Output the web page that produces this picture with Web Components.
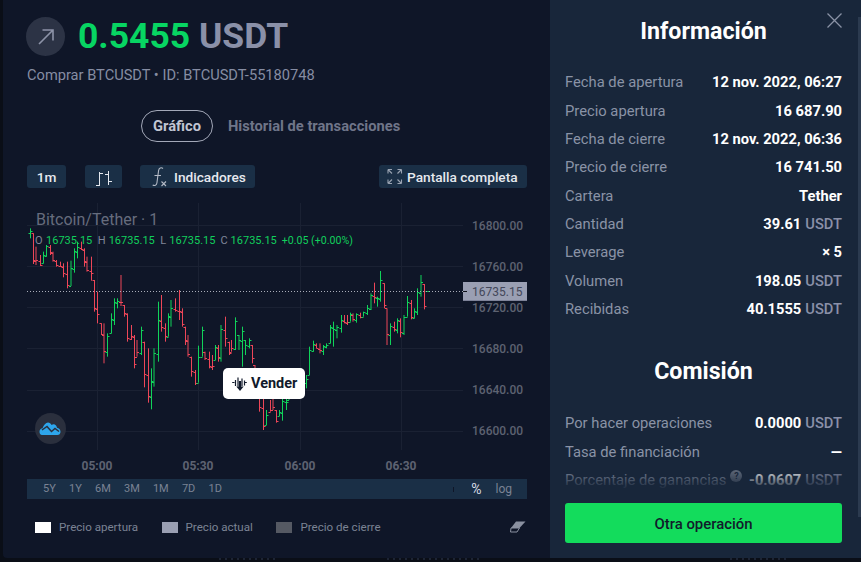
<!DOCTYPE html>
<html lang="es"><head><meta charset="utf-8"><title>Operación</title>
<style>
html,body{margin:0;padding:0;background:#0a0e17;font-family:Roboto,"Liberation Sans",sans-serif;overflow:hidden}
</style></head><body>
<trade-modal>
  <div slot="left">
    <trade-header amount="0.5455" unit="USDT" sub="Comprar BTCUSDT • ID: BTCUSDT-55180748"></trade-header>
    <tab-bar></tab-bar>
    <chart-toolbar></chart-toolbar>
    <price-chart></price-chart>
    <range-bar></range-bar>
    <chart-legend></chart-legend>
  </div>
  <info-panel slot="right">
    <panel-title>Información</panel-title>
    <info-row label="Fecha de apertura" value="12 nov. 2022, 06:27"></info-row>
    <info-row label="Precio apertura" value="16 687.90"></info-row>
    <info-row label="Fecha de cierre" value="12 nov. 2022, 06:36"></info-row>
    <info-row label="Precio de cierre" value="16 741.50"></info-row>
    <info-row label="Cartera" value="Tether"></info-row>
    <info-row label="Cantidad" value="39.61" unit="USDT"></info-row>
    <info-row label="Leverage" value="× 5"></info-row>
    <info-row label="Volumen" value="198.05" unit="USDT"></info-row>
    <info-row label="Recibidas" value="40.1555" unit="USDT"></info-row>
    <panel-title second>Comisión</panel-title>
    <info-row label="Por hacer operaciones" value="0.0000" unit="USDT"></info-row>
    <info-row label="Tasa de financiación" value="—" bright></info-row>
    <info-row label="Porcentaje de ganancias" value="-0.0607" unit="USDT" help></info-row>
  </info-panel>
</trade-modal>
<back-strip></back-strip>
<script>
const def=(name,html,init)=>customElements.define(name,class extends HTMLElement{
  connectedCallback(){ if(this.shadowRoot)return; const r=this.attachShadow({mode:'open'}); r.innerHTML=typeof html==='function'?html(this):html; init&&init(r,this);}
});
def('back-strip',`<style>
:host{display:flex;height:2px;padding-left:219px}
i{display:block;height:2px;background:repeating-linear-gradient(90deg,#1d2434 0 2px,transparent 2px 6px)}
</style><i style="width:60px"></i><i style="width:95px;margin-left:108px"></i><i style="width:60px;margin-left:248px"></i>`);
def('trade-modal',`<style>
:host{display:grid;grid-template-columns:547px 311px;margin-left:3px;width:858px;height:558px;background:#0f1628;overflow:hidden;border-bottom-left-radius:4px}
.l{min-width:0}.r{min-width:0;height:558px}
</style><div class="l"><slot name="left"></slot></div><div class="r"><slot name="right"></slot></div>`);
def('trade-header',h=>`<style>
:host{display:block;padding:17px 0 0 23px;box-sizing:border-box;height:94px}
.top{display:flex;align-items:center;gap:13px;height:39px}
.c{width:39px;height:39px;border-radius:50%;background:#2c3345;display:flex;align-items:center;justify-content:center;flex:none}
.t{font:700 35.5px/37px Roboto,sans-serif;color:#07d562;white-space:nowrap}
.t span{color:#8a90a8}
.s{font:400 14.65px/18px Roboto,sans-serif;color:#868da3;margin:10px 0 0 1px;white-space:nowrap}
</style><div class="top"><div class="c"><svg width="20" height="20" viewBox="0 0 20 20" fill="none" stroke="#8d93a8" stroke-width="1.6"><path d="M3 17 17 3M6.5 3H17V13.5"/></svg></div>
<div class="t">${h.getAttribute('amount')} <span>${h.getAttribute('unit')}</span></div></div>
<div class="s">${h.getAttribute('sub')}</div>`);
def('tab-bar',`<style>
:host{display:flex;align-items:center;height:32px;margin-top:16px;padding-left:138px;box-sizing:border-box;gap:15px;font:700 14.7px/18px Roboto,sans-serif;white-space:nowrap}
.a{box-sizing:border-box;height:32px;width:72px;border:1px solid #a3a8b8;border-radius:16px;color:#c1c5d2;display:flex;align-items:center;justify-content:center}
.b{color:#6f7589}
</style><div class="a">Gráfico</div><div class="b">Historial de transacciones</div>`);
def('tool-btn',h=>`<style>
:host{display:flex;align-items:center;justify-content:center;height:23px;background:#1a2f46;border-radius:3px;color:#e6e9ef;font:500 13.7px/18px Roboto,sans-serif;white-space:nowrap;box-sizing:border-box}
</style><slot></slot>`);
def('chart-toolbar',`<style>
:host{display:flex;align-items:center;height:23px;margin:23px 23px 0 24px;justify-content:space-between}
.g{display:flex}
svg{display:block}
</style><div class="g">
<tool-btn style="width:39px">1m</tool-btn>
<tool-btn style="width:37px;margin-left:19px"><svg width="37" height="23" viewBox="0 0 37 23" fill="none" stroke="#e4e8ee"><path d="M14.5 7v14M11 20.5h3.5M14.5 8.5H18M23.5 6v14M20 9.500h3.500M23.500 16.500H27"/></svg></tool-btn>
<tool-btn style="width:115px;margin-left:18px;justify-content:flex-start"><svg width="34" height="23" viewBox="0 0 34 23" fill="none" stroke="#b4bac6" stroke-width="1.100"><path d="M23 3.500c-1.800-1.400-4-.6-4.400 2l-1.700 12.500c-.4 2.400-2.200 3.200-4.200 2M14.500 10.500h6.500"/><path d="M21.500 16.500l4.500 4.500M26 16.500 21.500 21"/></svg>Indicadores</tool-btn>
</div>
<tool-btn style="width:148px;justify-content:flex-start"><svg width="28" height="23" viewBox="0 0 28 23" fill="none" stroke="#9aa3b2" stroke-width="1.100"><path d="M9 4.500h4M9 4.500v4M9 4.500l4 4M22.500 4.500h-4M22.500 4.500v4M22.500 4.500l-4 4M9 18.500h4M9 18.500v-4M9 18.500l4-4M22.500 18.500h-4M22.500 18.500v-4M22.500 18.500l-4-4"/></svg>Pantalla completa</tool-btn>`);
def('price-chart',`<style>
:host{display:block;position:relative;width:500px;height:269px;margin:15px 0 0 24px}
#s{display:block;position:absolute;left:0;top:0}
text{font-family:Roboto,sans-serif}
.ax{font-size:12px;font-weight:500;fill:#5d6271}
.tm{font-size:12px;font-weight:700;fill:#5d6271;text-anchor:middle}
.ttl{font-size:16px;fill:#666c7d}
.o{font-size:11px;fill:#80869a}.v{font-size:11px;fill:#11cf5c}
.vender{position:absolute;left:196px;top:165px;width:82px;height:31px;background:#fff;border-radius:5px;display:flex;align-items:center;gap:4px;padding-left:9px;box-sizing:border-box;font:700 14.5px/18px Roboto,sans-serif;color:#111a2b}
.logo{position:absolute;left:7.5px;top:210px;width:31px;height:31px;border-radius:50%;background:#2a2f3d;display:flex;align-items:center;justify-content:center}
.vender svg,.logo svg{display:block;flex:none}
</style>
<svg id="s" width="500" height="269" viewBox="27 203 500 269"></svg>
<div class="logo"><svg width="22" height="13" viewBox="0 0 22 13"><path d="M.5 9.500C.5 7.500 2 6.500 3.500 6.300 4.700 3 6.800.5 9 .5c1.600 0 2.800 1 3.600 2.400.6-.4 1.300-.6 2-.6 1.700 0 3 1.300 3.400 3.500 1.900.4 3.500 1.700 3.500 3.900 0 2-1.300 3.300-3.100 3.300H3c-1.600 0-2.500-1.500-2.500-3.500z" fill="#2ea6ec"/><path d="M3 8 8 4.500 12.500 9.500 16 6.500 20 9.500" fill="none" stroke="#2a2f3d" stroke-width="1.500"/></svg></div>
<div class="vender"><svg width="15" height="14" viewBox="0 0 15 14" fill="none" stroke="#111a2b"><path d="M.2 5.500h2.300M3.500 3v6M6 .5v9M10 1.500v7.500M12.500 3.500v5M12.500 5.500h2.300" stroke-width="1.200"/><path d="M8 4v6.500" stroke-width="2.200"/><path d="M4.300 9.500h7.400L8 14z" fill="#111a2b" stroke="none"/></svg>Vender</div>`,
(r)=>{
 const s=r.getElementById('s');
 const z2=[[90,85,115,'g'],[100,100,192,'r'],[110,140,195,'r'],[120,165,198,'r'],[130,155,190,'g'],[140,135,170,'g'],[150,135,165,'r'],[160,155,185,'r'],[170,180,200,'r'],[180,185,200,'r'],[190,190,232,'r'],[203,185,265,'r'],[213,182,258,'g'],[223,145,218,'g'],[233,125,175,'g'],[243,125,150,'r'],[253,145,200,'r'],[263,170,215,'r'],[273,170,242,'r'],[283,240,335,'r'],[293,275,370,'r'],[303,370,405,'r'],[313,370,490,'r'],[323,400,470,'g'],[333,340,400,'g'],[343,295,375,'g'],[353,295,325,'g'],[363,225,318,'r'],[373,315,350,'r'],[383,340,425,'r'],[393,375,420,'r'],[403,405,505,'r'],[413,420,470,'r'],[423,380,465,'g'],[433,425,562,'r'],[445,445,608,'r'],[455,505,628,'g'],[463,445,560,'g'],[475,305,485,'g'],[485,285,395,'r'],[495,370,425,'r'],[505,340,410,'g'],[515,300,380,'g'],[525,295,335,'r'],[537,270,360,'r'],[547,325,380,'r'],[555,380,435,'r'],[565,405,470,'r'],[575,470,530,'r'],[585,510,555,'r'],[595,437,548,'g'],[607,380,470,'g'],[617,455,480,'r'],[627,455,505,'r'],[637,465,510,'r'],[645,435,480,'g'],[655,435,485,'r'],[665,375,485,'g'],[677,350,440,'r'],[687,425,465,'r'],[695,420,455,'r'],[707,352,450,'g'],[717,405,450,'g'],[727,380,500,'g'],[737,420,465,'g'],[747,415,445,'g'],[757,435,490,'r'],[767,495,590,'r'],[777,590,635,'r'],[790,595,690,'r'],[798,630,675,'g']];
 const z3=[[0,600,635,'r'],[10,595,630,'r'],[20,630,668,'r'],[27,630,648,'g'],[38,595,662,'g'],[48,595,630,'g'],[58,540,600,'g'],[108,525,565,'g'],[118,440,525,'g'],[130,422,455,'g'],[140,430,445,'r'],[150,430,460,'r'],[160,435,465,'g'],[170,430,445,'g'],[180,375,430,'g'],[190,365,440,'g'],[203,375,415,'g'],[213,345,398,'g'],[223,345,370,'r'],[232,345,375,'r'],[242,338,365,'g'],[250,340,365,'r'],[260,340,368,'g'],[270,338,355,'r'],[280,335,350,'g'],[293,315,345,'g'],[303,280,330,'g'],[313,248,310,'r'],[323,290,320,'g'],[332,213,305,'g'],[342,250,325,'r'],[352,325,435,'r'],[362,370,435,'g'],[372,365,395,'r'],[382,355,400,'g'],[392,355,412,'r'],[402,345,405,'g'],[412,288,350,'g'],[424,300,358,'r'],[433,325,355,'g'],[442,265,345,'g'],[454,225,290,'g'],[463,252,328,'r'],[473,273,274,'g']];
 const bars=[...z2.map(b=>[b[0]/3,200+b[1]/3,200+b[2]/3,b[3]]),...z3.map(b=>[270+b[0]/3,200+b[1]/3,200+b[2]/3,b[3]])];
 let o='';
 for(const y of [225,266,307,348,390,431]) o+=`<path d="M27 ${y+.5}H463" stroke="#1a2133"/>`;
 for(const x of [97,198,300,401]) o+=`<path d="M${x+.5} 203V450" stroke="#1a2133"/>`;
 let g='',d='',prev=null;
 bars.forEach(([x,t,b,c],i)=>{
  const xx=Math.floor(x)+((i%5===2)?0:.5);
  let op=prev==null?t+(b-t)/2:Math.min(b,Math.max(t,prev));
  let cl=c==='r'?b-(b-t)*(i%2?.12:.3):t+(b-t)*(i%2?.12:.3);
  op=Math.round(op)+.5;cl=Math.round(cl)+.5;prev=cl;
  const seg=`M${xx} ${t}V${b}M${xx-2} ${op}H${xx}M${xx} ${cl}H${xx+2}`;
  if(c==='r')d+=seg;else g+=seg;
 });
 o+=`<path d="${d}" stroke="#ee4658" fill="none"/><path d="${g}" stroke="#10d35a" fill="none"/>`;
 o+=`<path d="M27 291.500H463" stroke="#a9adb9" stroke-dasharray="1 2"/>`;
 o+=`<rect x="463" y="282" width="64" height="19" fill="#9a9fb3"/><rect x="463" y="300" width="64" height="1" fill="#7d8298"/>`;
 o+=`<path d="M463 291.500h4" stroke="#0d1018"/><text x="472" y="295.500" class="ax" style="fill:#43475a;font-weight:400">16735.15</text>`;
 [[16800,229.500],[16760,270.500],[16720,311.500],[16680,352.500],[16640,394],[16600,435]].forEach(([v,y])=>o+=`<text x="472" y="${y}" class="ax">${v}.00</text>`);
 [['05:00',97],['05:30',198],['06:00',300],['06:30',401]].forEach(([t,x])=>o+=`<text x="${x}" y="470" class="tm">${t}</text>`);
 o+=`<text x="36" y="225" class="ttl">Bitcoin/Tether · 1</text>`;
 o+=`<text y="244" x="35"><tspan class="o">O</tspan><tspan class="v" dx="3.500">16735.15</tspan><tspan class="o" dx="5.500">H</tspan><tspan class="v" dx="3">16735.15</tspan><tspan class="o" dx="5.500">L</tspan><tspan class="v" dx="3">16735.15</tspan><tspan class="o" dx="5">C</tspan><tspan class="v" dx="3">16735.15</tspan><tspan class="v" dx="5" style="font-size:10.600px">+0.05 (+0.00%)</tspan></text>`;
 s.innerHTML=o;
});
def('range-bar',`<style>
:host{display:flex;align-items:center;height:20px;width:500px;margin:7px 0 0 24px;background:#1a2f46;font:400 11px/20px Roboto,sans-serif;color:#7b8394;white-space:nowrap;padding-left:16px;box-sizing:border-box}
.g{display:flex;gap:13.200px}
.sep{width:1px;height:5px;background:#0f1628;margin-left:auto;margin-right:17px}
.p{color:#d8dce4;font-size:14px;margin-right:14px}
.lg{margin-right:15px;font-size:12px}
</style><div class="g"><span>5Y</span><span>1Y</span><span>6M</span><span>3M</span><span>1M</span><span>7D</span><span>1D</span></div><div class="sep"></div><span class="p">%</span><span class="lg">log</span>`);
def('chart-legend',`<style>
:host{display:flex;align-items:center;height:20px;margin:18px 24px 0 32px;font:400 11.600px/20px Roboto,sans-serif;color:#7b8394;white-space:nowrap}
i{display:block;width:16px;height:11px;margin-right:8px;flex:none}
span{margin-right:23.500px}
svg{margin-left:auto}
</style><i style="background:#fff"></i><span>Precio apertura</span><i style="background:#9a9fb3"></i><span>Precio actual</span><i style="background:#555963"></i><span>Precio de cierre</span>
<svg width="16" height="12" viewBox="0 0 16 12"><path d="M6 .500h9.500L9.500 7H1z" fill="#8a90a0"/><path d="M1 7h8.500l-2.500 4H.500L1 7z" fill="none" stroke="#8a90a0"/></svg>`);
def('info-panel',`<style>
:host{display:flex;flex-direction:column;position:relative;height:558px;background:#18263a;box-sizing:border-box}
.scroll{height:489px;padding:0 19px 0 15px;overflow:hidden;box-sizing:border-box;position:relative}
.fade{position:absolute;left:0;right:0;top:466px;height:24px;background:linear-gradient(rgba(24,38,58,0),#18263a);pointer-events:none}
.bar{position:absolute;right:0;top:17px;width:3px;height:500px;background:#2b3a4f}
.x{position:absolute;left:277px;top:13px;display:block}
.btn{margin:14px 19px 0 15px;height:40px;border-radius:3px;background:#13dc5c;color:#111a2b;font:500 14.9px/42px Roboto,sans-serif;text-align:center}
</style><div class="scroll"><slot></slot><div class="fade"></div></div>
<div class="btn">Otra operación</div><div class="bar"></div>
<svg class="x" width="15" height="15" viewBox="0 0 15 15" stroke="#8a92a5" stroke-width="1.300"><path d="M.5.5l14 14M14.500.5l-14 14"/></svg>`);
def('panel-title',h=>`<style>
:host{display:block;text-align:center;font:700 23.200px/28px Roboto,sans-serif;color:#fff;padding:${h.hasAttribute('second')?'34px 0 24px':'17px 0 23px'}}
</style><slot></slot>`);
def('info-row',h=>{const u=h.getAttribute('unit');return `<style>
:host{display:flex;justify-content:space-between;align-items:center;height:28.350px;font:400 14.750px/20px Roboto,sans-serif;color:#8a93a6;white-space:nowrap}
b{font-weight:700;color:#fff;font-size:14.700px}
.u{color:#8a90a8;font-weight:500;font-size:14.700px;margin-left:4px}
.h{display:inline-block;width:12px;height:12px;border-radius:50%;background:#6b7484;color:#18263a;font:700 9px/12px Roboto,sans-serif;text-align:center;vertical-align:6px;margin-left:4px}
</style><span>${h.getAttribute('label')}${h.hasAttribute('help')?'<span class="h">?</span>':''}</span><span><b>${h.getAttribute('value')}</b>${u?`<span class="u">${u}</span>`:''}</span>`});
</script>
</body></html>
